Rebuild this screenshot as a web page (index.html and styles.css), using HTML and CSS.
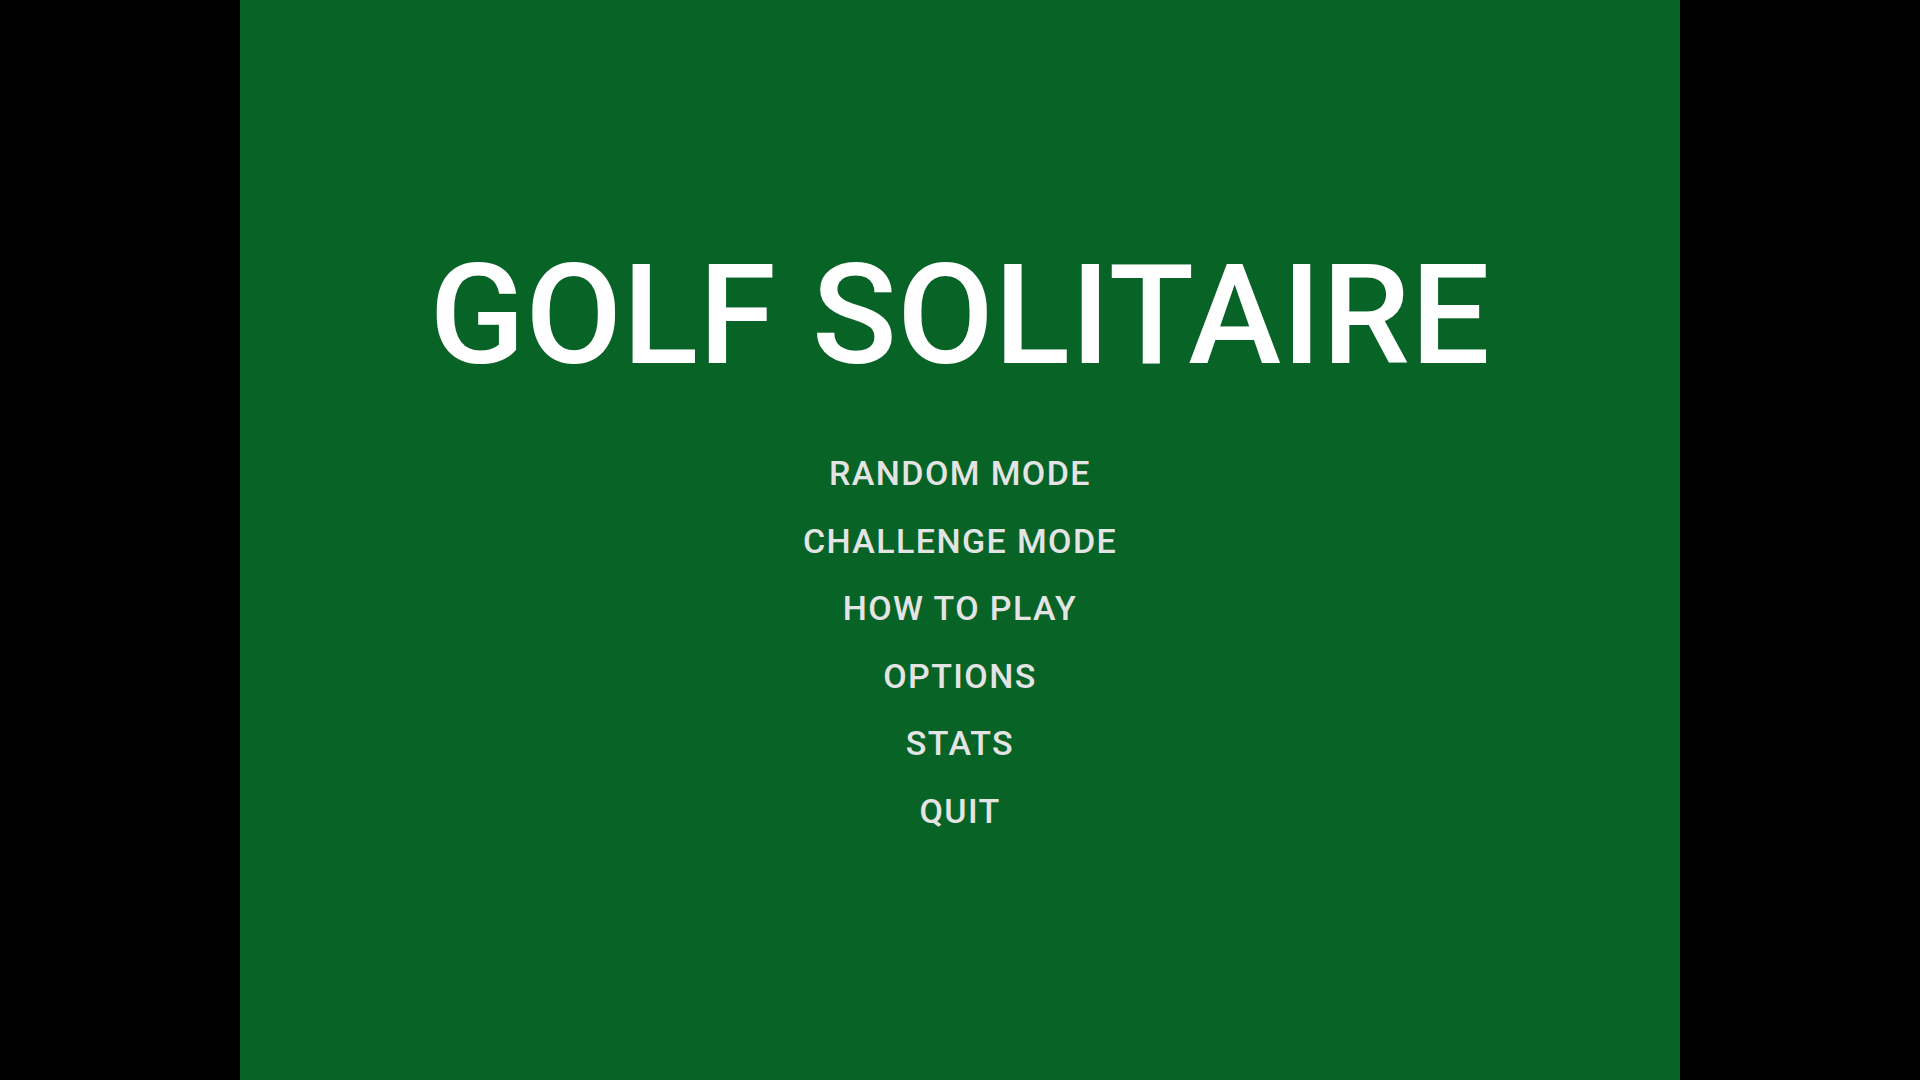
FILE: index.html
```html
<!DOCTYPE html>
<html lang="en">
<head>
<meta charset="utf-8">
<title>Golf Solitaire</title>
<link rel="stylesheet" href="styles.css">
</head>
<body>
<main class="stage">
  <h1 class="title">GOLF SOLITAIRE</h1>
  <nav class="menu">
    <div class="menu-item">RANDOM MODE</div>
    <div class="menu-item">CHALLENGE MODE</div>
    <div class="menu-item">HOW TO PLAY</div>
    <div class="menu-item">OPTIONS</div>
    <div class="menu-item">STATS</div>
    <div class="menu-item">QUIT</div>
  </nav>
</main>
</body>
</html>
```
FILE: styles.css
```css
html, body {
  margin: 0;
  padding: 0;
  width: 100%;
  height: 100%;
  background: #000;
  overflow: hidden;
}
body {
  display: flex;
  justify-content: center;
  font-family: Roboto, "Noto Sans", sans-serif;
}
.stage {
  width: 1440px;
  height: 1080px;
  background: #086326;
  display: flex;
  flex-direction: column;
  align-items: center;
  padding-top: 245px;
  box-sizing: border-box;
}
.title {
  margin: 0;
  font-size: 140px;
  line-height: 1;
  font-weight: 500;
  color: #ffffff;
  letter-spacing: 0.6px;
}
.menu {
  margin-top: 55px;
  display: flex;
  flex-direction: column;
  align-items: center;
}
.menu-item {
  font-size: 34px;
  line-height: 67.5px;
  font-weight: 500;
  color: #e4e4e4;
  letter-spacing: 1.4px;
}
```
